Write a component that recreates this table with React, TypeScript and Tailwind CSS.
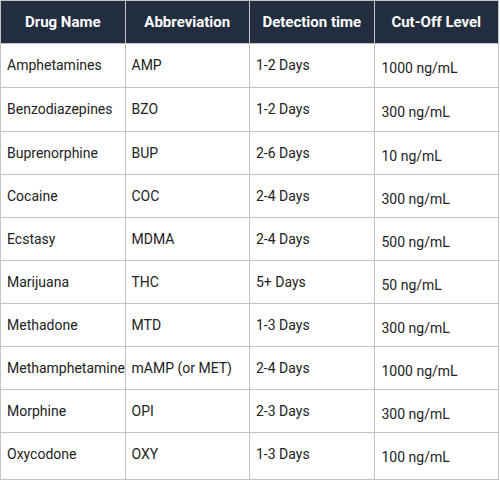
const ROWS: [string, string, string, string][] = [
  ["Amphetamines", "AMP", "1-2 Days", "1000 ng/mL"],
  ["Benzodiazepines", "BZO", "1-2 Days", "300 ng/mL"],
  ["Buprenorphine", "BUP", "2-6 Days", "10 ng/mL"],
  ["Cocaine", "COC", "2-4 Days", "300 ng/mL"],
  ["Ecstasy", "MDMA", "2-4 Days", "500 ng/mL"],
  ["Marijuana", "THC", "5+ Days", "50 ng/mL"],
  ["Methadone", "MTD", "1-3 Days", "300 ng/mL"],
  ["Methamphetamine", "mAMP (or MET)", "2-4 Days", "1000 ng/mL"],
  ["Morphine", "OPI", "2-3 Days", "300 ng/mL"],
  ["Oxycodone", "OXY", "1-3 Days", "100 ng/mL"],
];

const HEADERS = ["Drug Name", "Abbreviation", "Detection time", "Cut-Off Level"];

function rowHeight(i: number) {
  if (i === ROWS.length - 1) return "h-[47px]";
  if (i < 2) return "h-[44px]";
  return "h-[43px]";
}

export default function App() {
  return (
    <div className="w-[500px] h-[481px] bg-white font-['Roboto',sans-serif]">
      <table className="w-[499px] table-fixed border-collapse">
        <thead>
          <tr className="h-[43px] bg-[#222d3f]">
            {HEADERS.map((h) => (
              <th
                key={h}
                className="border border-[#c4c4c4] text-center text-[15px] font-bold text-white"
              >
                {h}
              </th>
            ))}
          </tr>
        </thead>
        <tbody>
          {ROWS.map((row, i) => (
            <tr key={row[0]} className={rowHeight(i)}>
              {row.map((cell, j) => (
                <td
                  key={j}
                  className={
                    "border border-[#c4c4c4] align-top text-[14px] leading-[16px] text-[#222] whitespace-nowrap " +
                    (j === 3 ? "pt-[16px] pl-[7px]" : "pt-[13px] px-[6px]")
                  }
                >
                  {cell}
                </td>
              ))}
            </tr>
          ))}
        </tbody>
      </table>
    </div>
  );
}
